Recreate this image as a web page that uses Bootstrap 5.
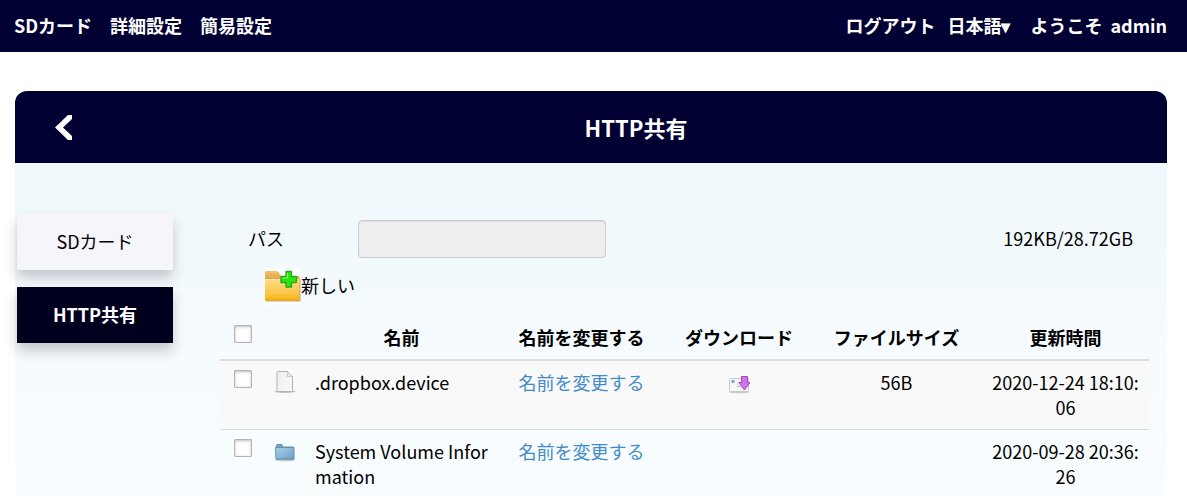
<!DOCTYPE html>
<html lang="ja">
<head>
<meta charset="utf-8">
<meta name="viewport" content="width=device-width, initial-scale=1">
<title>HTTP共有</title>
<link rel="stylesheet" href="https://cdn.jsdelivr.net/npm/bootstrap@5.3.0/dist/css/bootstrap.min.css">
<style>
body { font-family: "Noto Sans CJK JP", sans-serif; font-size: 18px; line-height: 25px; color: #000; background: #fff; }
.topbar { background: #000033; height: 52px; padding: 0 20px 2px 14px; font-weight: 700; }
.topbar a, .topbar button, .topbar span { color: #fff; text-decoration: none; white-space: nowrap; }
.topbar button { font-weight: 700; }
.top-links { gap: 18px; }
.plain-btn { background: none; border: 0; padding: 0; color: inherit; }
.panel { margin: 39px 20px 0 15px; }
.panel-head { background: #000033; color: #fff; height: 72px; border-radius: 12px 12px 0 0; }
.back-link { width: 90px; padding-left: 39px; }
.panel-head h1 { font-size: 22px; line-height: 32px; font-weight: 700; }
.panel-body { background: linear-gradient(#f0f8fc, #f9fdff); padding: 51px 18px 0 2px; gap: 47px; }
.side-menu { width: 156px; gap: 17px; }
.side-menu a { height: 56px; padding-bottom: 2px; background: #f5f5fb; color: #000; text-decoration: none; box-shadow: 0 8px 12px rgba(0, 0, 0, .2); }
.side-menu a.active { background: #00001e; color: #fff; font-weight: 700; }
.share { padding-top: 6px; min-width: 0; }
.path-row { padding: 0 16px 0 28px; }
.path-row label, .path-row span { padding-bottom: 2px; }
.path-row label { width: 110px; }
.path-row input { width: 248px; height: 38px; background: #eee; border: 1px solid #ccc; border-radius: 4px; box-shadow: inset 0 1px 1px rgba(0, 0, 0, .075); padding: 6px 12px; }
.new-row { padding: 11px 0 11px 45px; }
.files { table-layout: fixed; min-width: 900px; }
.files th, .files td { padding: 9px 8px; vertical-align: top; text-align: center; word-break: break-all; }
.files thead tr { border-bottom: 2px solid #ddd; }
.files tbody tr { border-bottom: 1px solid #ddd; }
.files tbody tr:nth-child(odd) { background: #f9f9f9; }
.files .pick { padding-left: 14px; padding-right: 0; text-align: left; }
.files .file-name { padding-right: 4px; text-align: left; }
.files .kind { padding-left: 10px; padding-right: 0; text-align: left; }
.files td a { color: #428bca; text-decoration: none; }
.files input { appearance: none; display: block; width: 18px; height: 18px; border: 1px solid #b4b4b4; border-radius: 1px; background: #fff; box-shadow: inset 0 1px 3px rgba(0, 0, 0, .25); }
.files input:checked { background: #428bca; }
</style>
</head>
<body>
<nav class="topbar d-flex align-items-center justify-content-between">
  <div class="top-links d-flex">
    <a href="#">SDカード</a><a href="#">詳細設定</a><a href="#">簡易設定</a>
  </div>
  <div class="d-flex">
    <a href="#" class="me-2 pe-1">ログアウト</a>
    <div class="dropdown me-3 pe-1">
      <button type="button" class="plain-btn" data-bs-toggle="dropdown" aria-expanded="false">日本語▾</button>
      <ul class="dropdown-menu"><li><button type="button" class="dropdown-item text-dark">日本語</button></li></ul>
    </div>
    <span class="me-2">ようこそ</span><span>admin</span>
  </div>
</nav>

<main class="panel">
  <header class="panel-head d-flex align-items-center">
    <a href="#" class="back-link flex-shrink-0" aria-label="戻る"><svg class="d-block" width="18" height="28" viewBox="0 0 18 28"><path d="M18 2v4L9 14.500l9 8.500v4h-4L1 14.500 14 2z" fill="#fff"/></svg></a>
    <h1 class="flex-grow-1 text-center mb-0">HTTP共有</h1>
  </header>
  <div class="panel-body d-flex">
    <nav class="side-menu d-flex flex-column flex-shrink-0">
      <a href="#" class="d-flex align-items-center justify-content-center">SDカード</a>
      <a href="#" class="active d-flex align-items-center justify-content-center">HTTP共有</a>
    </nav>
    <section class="share flex-grow-1">
      <div class="path-row d-flex align-items-center">
        <label for="path">パス</label>
        <input id="path" type="text" readonly>
        <span class="ms-auto">192KB/28.72GB</span>
      </div>
      <div class="new-row">
        <button type="button" class="plain-btn d-flex align-items-start">
          <svg width="36" height="36" viewBox="0 0 36 36">
            <defs>
              <linearGradient id="fold" x2="0" y2="1"><stop stop-color="#ffdc86"/><stop offset=".7" stop-color="#fcc544"/><stop offset="1" stop-color="#f8ac08"/></linearGradient>
              <linearGradient id="foldBack" x2="0" y2="1"><stop stop-color="#f3c271"/><stop offset="1" stop-color="#dc9a35"/></linearGradient>
            </defs>
            <path fill="#fff" d="M0 0h36v36H0z"/>
            <path d="M1 10h34.500v22.500H1z" fill="#b9a783"/>
            <path d="M0 3q0-1 1-1h10.500q1.500 0 2.200 1.200L16 7h17.500q1 0 1 1v5H0z" fill="url(#foldBack)"/>
            <path d="M0 10h34.500v20.500q0 1-1 1H0z" fill="url(#fold)"/>
            <path d="M0 10.500h34" stroke="#ffe7a8"/>
            <path d="M21 2.500h5.500v5h5v6h-5v4.500H21v-4.500h-5v-6h5z" fill="#28e80f" stroke="#2da51b" stroke-width="1.300" stroke-linejoin="round"/>
            <path d="M22.500 4v5H17.500" stroke="#8df27c" fill="none"/>
          </svg>
          <span class="pt-1">新しい</span>
        </button>
      </div>
      <table class="files w-100">
        <colgroup><col style="width:44px"><col style="width:43px"><col style="width:189px"><col style="width:171px"><col style="width:144px"><col style="width:171px"><col style="width:167px"></colgroup>
        <thead>
          <tr>
            <th class="pick"><input type="checkbox" aria-label="すべて選択"></th><th></th>
            <th>名前</th><th>名前を変更する</th><th>ダウンロード</th><th>ファイルサイズ</th><th>更新時間</th>
          </tr>
        </thead>
        <tbody>
          <tr>
            <td class="pick"><input type="checkbox" aria-label=".dropbox.device"></td>
            <td class="kind"><svg class="d-block" width="22" height="24" viewBox="0 0 22 24">
              <defs><linearGradient id="page" x2="1" y2="1"><stop stop-color="#ededed"/><stop offset="1" stop-color="#fafafa"/></linearGradient></defs>
              <ellipse cx="11" cy="21.500" rx="10.500" ry="1.500" fill="#bbb"/>
              <path d="M4 1.500h9.500l5 5v14q0 1-1 1H4q-1 0-1-1v-18q0-1 1-1z" fill="url(#page)" stroke="#b2b2b2"/>
              <path d="M13.500 1.500q1 2 0 5q3-.8 5 0z" fill="#fff" stroke="#bdbdbd"/>
            </svg></td>
            <td class="file-name">.dropbox.device</td>
            <td><a href="#">名前を変更する</a></td>
            <td><a href="#" aria-label="ダウンロード"><svg class="d-block mx-auto" width="22" height="24" viewBox="0 0 22 24">
              <ellipse cx="11" cy="22" rx="10.500" ry="1.500" fill="#ccc"/>
              <rect x="1.500" y="8.500" width="19" height="13" rx="1" fill="#f8f8f8" stroke="#c9c9c9"/>
              <path d="M3.500 10h3v3h-3z" fill="#7aa3dc"/>
              <path d="M9 14h5M8.500 16.500h5" stroke="#bbb"/>
              <path d="M13.500 6.500h6v6h2.500L16.500 20 11 12.500h2.500z" fill="#cf72ee" stroke="#a54bb9" stroke-linejoin="round"/>
            </svg></a></td>
            <td>56B</td><td>2020-12-24 18:10:06</td>
          </tr>
          <tr>
            <td class="pick"><input type="checkbox" aria-label="System Volume Information"></td>
            <td class="kind"><svg class="d-block" width="22" height="24" viewBox="0 0 22 24">
              <defs><linearGradient id="dir" x2="1" y2="1"><stop stop-color="#acd0e8"/><stop offset="1" stop-color="#6c9fc7"/></linearGradient></defs>
              <ellipse cx="11" cy="21" rx="10.500" ry="1.500" fill="#ccc"/>
              <path d="M2.500 20V6.500q0-1 1-1h4q.8 0 .8 1V8h11.200v12z" fill="#7ba6c5" stroke="#5b86a6"/>
              <path d="M1.500 8.500h18.500v11.500H2z" fill="url(#dir)" stroke="#648fb0"/>
            </svg></td>
            <td class="file-name">System Volume Information</td>
            <td><a href="#">名前を変更する</a></td>
            <td></td><td></td><td>2020-09-28 20:36:26</td>
          </tr>
        </tbody>
      </table>
    </section>
  </div>
</main>
<script src="https://cdn.jsdelivr.net/npm/bootstrap@5.3.0/dist/js/bootstrap.bundle.min.js"></script>
</body>
</html>
